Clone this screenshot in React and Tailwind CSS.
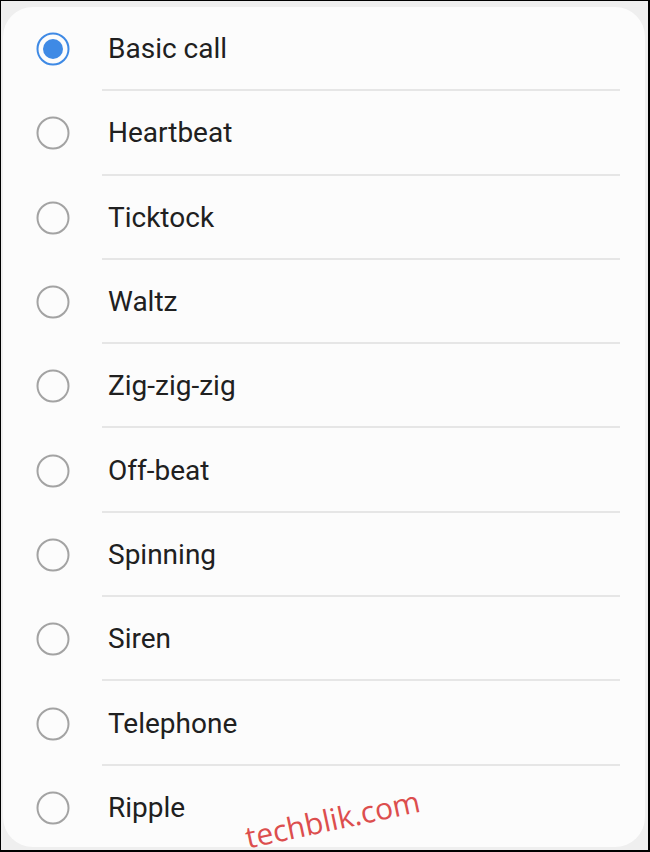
import React from "react";

const items = [
  "Basic call",
  "Heartbeat",
  "Ticktock",
  "Waltz",
  "Zig-zig-zig",
  "Off-beat",
  "Spinning",
  "Siren",
  "Telephone",
  "Ripple",
];

function Radio({ checked }) {
  return (
    <svg width="34" height="34" viewBox="0 0 34 34" className="shrink-0">
      {checked ? (
        <>
          <circle cx="17" cy="17" r="15.5" fill="none" stroke="#3f8ae5" strokeWidth="2" />
          <circle cx="17" cy="17" r="10" fill="#3f8ae5" />
        </>
      ) : (
        <circle cx="17" cy="17" r="15.5" fill="none" stroke="#a3a3a3" strokeWidth="2" />
      )}
    </svg>
  );
}

export default function App() {
  return (
    <div
      className="relative w-[650px] h-[852px] bg-[#efefef] border-t border-l border-r-2 border-b-2 border-black overflow-hidden"
      style={{ fontFamily: "Roboto, 'Noto Sans', sans-serif" }}
    >
      <div className="absolute left-[2px] top-[6px] w-[642px] h-[840px] bg-[#fcfcfc] rounded-[30px] flex flex-col">
        {items.map((name, i) => (
          <div key={name} className="flex flex-col">
            {i > 0 && <div className="ml-[99px] mr-[25px] h-[2px] bg-[#e6e6e6]" />}
            <div className="flex items-center h-[82.3px] pl-[33px] pt-[2px]">
              <Radio checked={i === 0} />
              <span className="ml-[38px] text-[28px] text-[#202020] leading-none">{name}</span>
            </div>
          </div>
        ))}
      </div>
      <div
        className="absolute left-[242px] top-[794px] text-[30px] text-[#dc4e4e] leading-none whitespace-nowrap"
        style={{ fontFamily: "'Open Sans', sans-serif", transform: "rotate(-12deg)", transformOrigin: "left bottom" }}
      >
        <span className="relative top-[28px]">techblik.com</span>
      </div>
    </div>
  );
}
